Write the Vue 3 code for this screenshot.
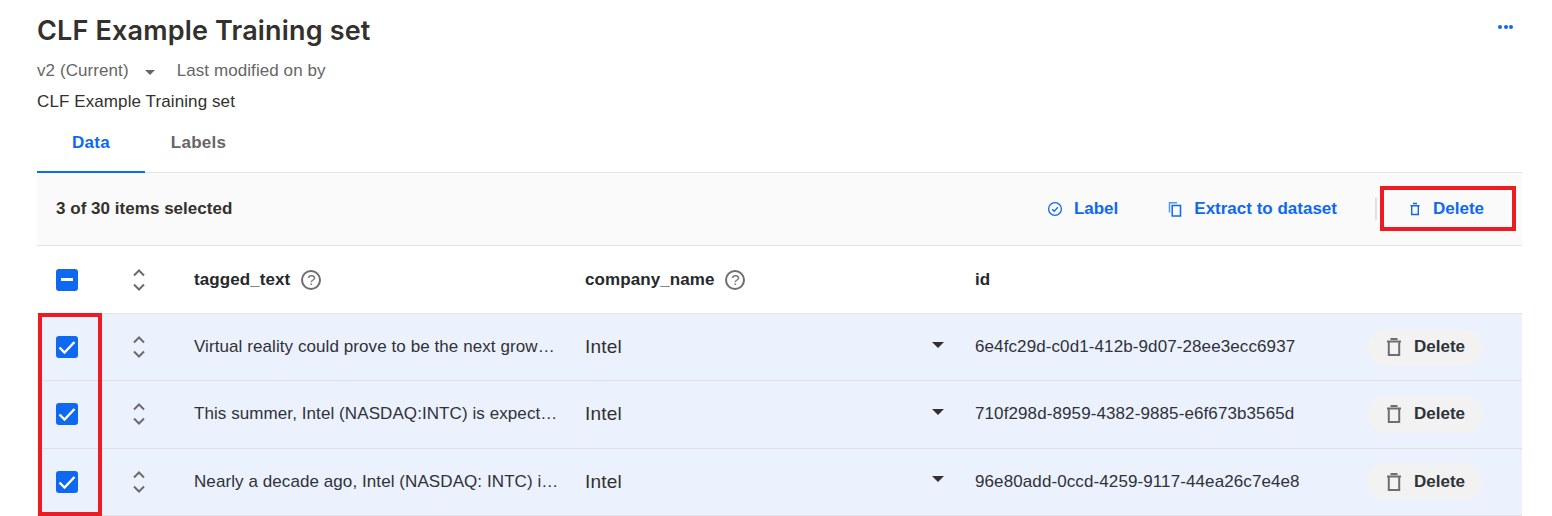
<script setup>
const rows = [
  { text: 'Virtual reality could prove to be the next grow…', id: '6e4fc29d-c0d1-412b-9d07-28ee3ecc6937' },
  { text: 'This summer, Intel (NASDAQ:INTC) is expect…', id: '710f298d-8959-4382-9885-e6f673b3565d' },
  { text: 'Nearly a decade ago, Intel (NASDAQ: INTC) i…', id: '96e80add-0ccd-4259-9117-44ea26c7e4e8' }
]
</script>

<template>
  <div class="page">
    <div class="title-row">
      <h1>CLF Example Training set</h1>
      <span class="more"><i></i><i></i><i></i></span>
    </div>
    <div class="meta">
      <span>v2 (Current)</span>
      <span class="caret small"></span>
      <span>Last modified on by</span>
    </div>
    <p class="desc">CLF Example Training set</p>

    <div class="tabs">
      <div class="tab active">Data</div>
      <div class="tab">Labels</div>
    </div>

    <div class="toolbar">
      <span class="count">3 of 30 items selected</span>
      <div class="actions">
        <button class="action label-btn">
          <svg width="16" height="16" viewBox="0 0 16 16" fill="none" stroke="currentColor" stroke-width="1.3">
            <circle cx="8" cy="8" r="6.4" />
            <path d="M5.200 8.200l2 2 3.700-4" />
          </svg>
          Label
        </button>
        <button class="action extract-btn">
          <svg width="16" height="16" viewBox="0 0 16 16" fill="none" stroke="currentColor" stroke-width="1.5">
            <path d="M2.500 11.500V1.800h7.500" opacity="0.7" />
            <rect x="5.200" y="4.500" width="8.300" height="10.500" />
          </svg>
          Extract to dataset
        </button>
        <span class="divider"></span>
        <button class="action delete-btn">
          <svg width="14" height="14" viewBox="0 0 14 14" fill="none" stroke="currentColor" stroke-width="1.400">
            <path d="M2.500 3.700h9M5 1.500h4M3.700 3.700v8.800h6.600V3.700" />
          </svg>
          Delete
          <span class="highlight"></span>
        </button>
      </div>
    </div>

    <div class="row head">
      <div class="check-cell"><span class="box"><span class="dash"></span></span></div>
      <div class="sort-cell">
        <svg width="14" height="24" viewBox="0 0 14 24" fill="none" stroke="#6b6b6b" stroke-width="2">
          <path d="M2 7.500l5-5 5 5M2 16.500l5 5 5-5" />
        </svg>
      </div>
      <div class="head-cell">
        tagged_text
        <span class="help">?</span>
      </div>
      <div class="head-cell">
        company_name
        <span class="help">?</span>
      </div>
      <div class="head-cell">id</div>
      <div></div>
    </div>

    <div class="body-rows">
      <div v-for="row in rows" :key="row.id" class="row item">
        <div class="check-cell">
          <span class="box">
            <svg width="22" height="22" viewBox="0 0 22 22" fill="none" stroke="#fff" stroke-width="2.400">
              <path d="M3.500 11.500l5 5 10-10.500" />
            </svg>
          </span>
        </div>
        <div class="sort-cell">
          <svg width="14" height="24" viewBox="0 0 14 24" fill="none" stroke="#6b6b6b" stroke-width="2">
            <path d="M2 7.500l5-5 5 5M2 16.500l5 5 5-5" />
          </svg>
        </div>
        <div class="text-cell">{{ row.text }}</div>
        <div class="company-cell">
          <span>Intel</span>
          <span class="caret"></span>
        </div>
        <div class="id-cell">{{ row.id }}</div>
        <div class="btn-cell">
          <button class="pill">
            <svg width="18" height="20" viewBox="0 0 18 20" fill="none" stroke="#6e6e6e" stroke-width="2">
              <path d="M2 4.500h14M5.500 2h7M3.800 4.500V18h10.400V4.500" />
            </svg>
            Delete
          </button>
        </div>
      </div>
      <span class="check-highlight"></span>
    </div>
  </div>
</template>

<style scoped>
.page {
  width: 1485px;
  margin-left: 37px;
  font-family: "Liberation Sans", Arial, sans-serif;
  letter-spacing: 0.08px;
  color: #2f3238;
}

.title-row {
  display: flex;
  justify-content: space-between;
  height: 60px;
  align-items: center;
}

h1 {
  margin: 0;
  font-family: "Inter", "Lato", sans-serif;
  font-size: 27px;
  font-weight: 600;
  letter-spacing: 0.17px;
  color: #33302e;
}

.more {
  display: flex;
  gap: 1.500px;
  margin-right: 9px;
  margin-top: -6px;
}

.more i {
  width: 4px;
  height: 4px;
  border-radius: 50%;
  background: #0f69f0;
}

.meta {
  display: flex;
  align-items: center;
  height: 22px;
  font-size: 17px;
  color: #666;
}

.caret {
  width: 0;
  height: 0;
  border-left: 6px solid transparent;
  border-right: 6px solid transparent;
  border-top: 6px solid #33302e;
}

.caret.small {
  margin: 2px 22px 0 16px;
  border-left-width: 5px;
  border-right-width: 5px;
  border-top-width: 5px;
  border-top-color: #666;
}

.desc {
  margin: 9px 0 0;
  height: 22px;
  line-height: 22px;
  font-size: 17px;
  letter-spacing: 0.1px;
  color: #33302e;
}

.tabs {
  display: flex;
  height: 60px;
  box-sizing: border-box;
  border-bottom: 1px solid #e4e4e4;
}

.tab {
  width: 108px;
  height: 60px;
  text-align: center;
  line-height: 60px;
  font-size: 17px;
  font-weight: 700;
  letter-spacing: 0.25px;
  color: #666;
  box-sizing: border-box;
}

.tab + .tab {
  width: 107px;
}

.tab.active {
  color: #0f69f0;
  border-bottom: 2px solid #0f69f0;
}

.toolbar {
  display: flex;
  align-items: center;
  justify-content: space-between;
  height: 73px;
  box-sizing: border-box;
  padding-left: 19px;
  background: #fafafa;
  border-bottom: 1px solid #e4e4e4;
}

.count {
  font-size: 17px;
  font-weight: 700;
  letter-spacing: 0.03px;
  color: #33302e;
}

.actions {
  display: flex;
  align-items: center;
  height: 100%;
}

button {
  border: 0;
  background: none;
  font-family: inherit;
  font-weight: 700;
  font-size: 17px;
  letter-spacing: 0;
  padding: 0;
}

.action {
  display: flex;
  align-items: center;
  gap: 11px;
  color: #0f69f0;
}

.label-btn {
  margin-right: 49px;
}

.extract-btn {
  margin-right: 38px;
}

.divider {
  width: 2px;
  height: 22px;
  background: #e0e0e0;
}

.delete-btn {
  position: relative;
  margin-left: 31px;
  margin-right: 38px;
  gap: 11px;
}

.highlight {
  position: absolute;
  left: -28px;
  top: 50%;
  margin-top: -23px;
  width: 136px;
  height: 45px;
  border: 4px solid #ed1c24;
  box-sizing: border-box;
}

.row {
  display: grid;
  grid-template-columns: 65px 92px 391px 390px 392px 1fr;
  align-items: center;
}

.head {
  height: 68px;
  box-sizing: border-box;
  border-bottom: 1px solid #e4e4e4;
}

.item {
  height: 67.300px;
  box-sizing: border-box;
  background: #ebf1fd;
  border-bottom: 1px solid #e0e0e0;
}

.check-cell {
  padding-left: 19px;
}

.box {
  display: flex;
  align-items: center;
  justify-content: center;
  width: 22px;
  height: 22px;
  border-radius: 3px;
  background: #0f69f0;
}

.dash {
  width: 12px;
  height: 3px;
  background: #fff;
}

.sort-cell {
  display: flex;
  padding-left: 30px;
}

.head-cell {
  display: flex;
  align-items: center;
  gap: 11px;
  font-size: 17px;
  font-weight: 700;
  letter-spacing: 0.08px;
  color: #26282c;
}

.help {
  display: flex;
  align-items: center;
  justify-content: center;
  width: 16px;
  height: 16px;
  border: 2px solid #6e6e6e;
  border-radius: 50%;
  font-size: 15px;
  font-weight: 400;
  letter-spacing: 0;
  color: #6e6e6e;
}

.text-cell {
  font-size: 17px;
  white-space: nowrap;
}

.company-cell {
  display: flex;
  align-items: center;
  justify-content: space-between;
  padding-right: 31px;
  font-size: 19px;
  letter-spacing: 0.2px;
  color: #33302e;
}

.company-cell .caret {
  margin-top: -5px;
}

.id-cell {
  font-size: 17px;
  letter-spacing: 0.1px;
}

.pill {
  display: flex;
  align-items: center;
  gap: 11px;
  width: 116px;
  height: 37px;
  padding-left: 18px;
  border-radius: 19px;
  background: #f2f2f2;
  color: #2f3238;
}

.body-rows {
  position: relative;
}

.check-highlight {
  position: absolute;
  left: 1px;
  top: -1px;
  width: 64px;
  height: 203px;
  border: 4px solid #ed1c24;
  box-sizing: border-box;
}
</style>
